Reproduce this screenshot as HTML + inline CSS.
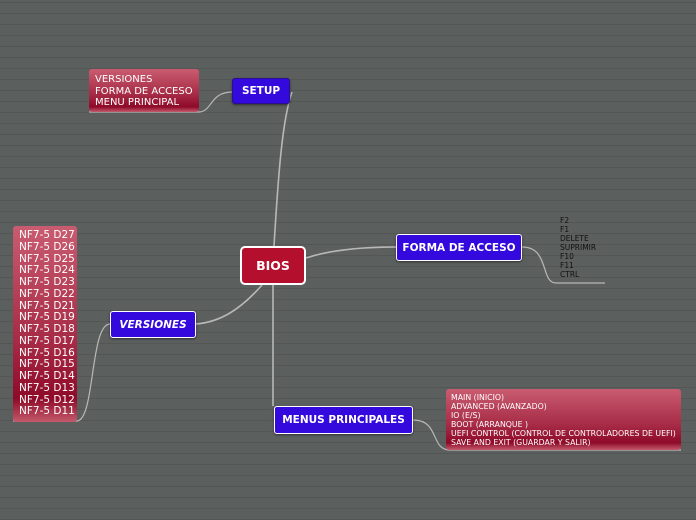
<!DOCTYPE html>
<html><head><style>
body{margin:0;width:696px;height:520px;overflow:hidden;font-family:"Liberation Sans","DejaVu Sans",sans-serif;
background-color:#5b5f5d;
background-image:
repeating-linear-gradient(0deg,rgba(0,0,0,.09) 0 1px,transparent 1px 11px);}
.n{position:absolute;box-sizing:border-box;color:#fff;font-weight:bold;display:flex;align-items:center;justify-content:center;font-family:"DejaVu Sans",sans-serif;}
.b{background:#3309dd;border:1px solid #fff;border-radius:3px;box-shadow:0 1px 2px rgba(0,0,0,.5);font-size:10.5px;}
.r{position:absolute;box-sizing:border-box;color:#fff;border-radius:3px;
background:linear-gradient(#c95c70,#a62a45 60%,#8e0a28 88%,#c45a6c);font-family:"DejaVu Sans",sans-serif;}
</style></head><body>
<svg width="696" height="520" style="position:absolute;left:0;top:0" fill="none" stroke="#b8b8b8" stroke-width="1.6">
<path d="M274 246 C278 180 282 120 292 92"/>
<path d="M262 285 C240 310 220 322 196 324"/>
<path d="M273 285 L273 406"/>
<path d="M306 258 C330 250 360 247 396 247"/>
<path d="M232 92 C210 92 212 112 199 112 L89 112" stroke-width="1.2"/>
<path d="M110 324 C90 324 95 420 77 421 L13 421" stroke-width="1.2"/>
<path d="M522 247 C550 247 540 283 556 283 L605 283" stroke-width="1.2"/>
<path d="M413 420 C440 420 430 450 450 450 L681 450" stroke-width="1.2"/>
</svg>
<div class="r" style="left:89px;top:69px;width:110px;height:43px;font-size:10px;line-height:11.5px;padding:5px 6px">VERSIONES<br>FORMA DE ACCESO<br>MENU PRINCIPAL</div>
<div class="n b" style="left:232px;top:78px;width:58px;height:26px;border-color:#2a1090">SETUP</div>
<div class="n" style="left:240px;top:246px;width:66px;height:39px;background:#b50f2e;border:2px solid #fff;border-radius:5px;font-size:12.5px">BIOS</div>
<div class="n b" style="left:396px;top:234px;width:126px;height:27px">FORMA DE ACCESO</div>
<div style="position:absolute;left:560px;top:216px;font-size:7.5px;line-height:9px;color:#111;font-family:'DejaVu Sans',sans-serif">F2<br>F1<br>DELETE<br>SUPRIMIR<br>F10<br>F11<br>CTRL</div>
<div class="n b" style="left:110px;top:311px;width:86px;height:27px;font-style:italic">VERSIONES</div>
<div class="r" style="left:13px;top:226px;width:64px;height:196px;font-size:10.5px;line-height:11.75px;padding:4px 0 0 6px">NF7-5 D27<br>NF7-5 D26<br>NF7-5 D25<br>NF7-5 D24<br>NF7-5 D23<br>NF7-5 D22<br>NF7-5 D21<br>NF7-5 D19<br>NF7-5 D18<br>NF7-5 D17<br>NF7-5 D16<br>NF7-5 D15<br>NF7-5 D14<br>NF7-5 D13<br>NF7-5 D12<br>NF7-5 D11</div>
<div class="n b" style="left:274px;top:406px;width:139px;height:28px">MENUS PRINCIPALES</div>
<div class="r" style="left:446px;top:389px;width:235px;height:61px;font-size:7.8px;line-height:9.1px;padding:4px 0 0 5px">MAIN (INICIO)<br>ADVANCED (AVANZADO)<br>IO (E/S)<br>BOOT (ARRANQUE )<br>UEFI CONTROL (CONTROL DE CONTROLADORES DE UEFI)<br>SAVE AND EXIT (GUARDAR Y SALIR)</div>
</body></html>
